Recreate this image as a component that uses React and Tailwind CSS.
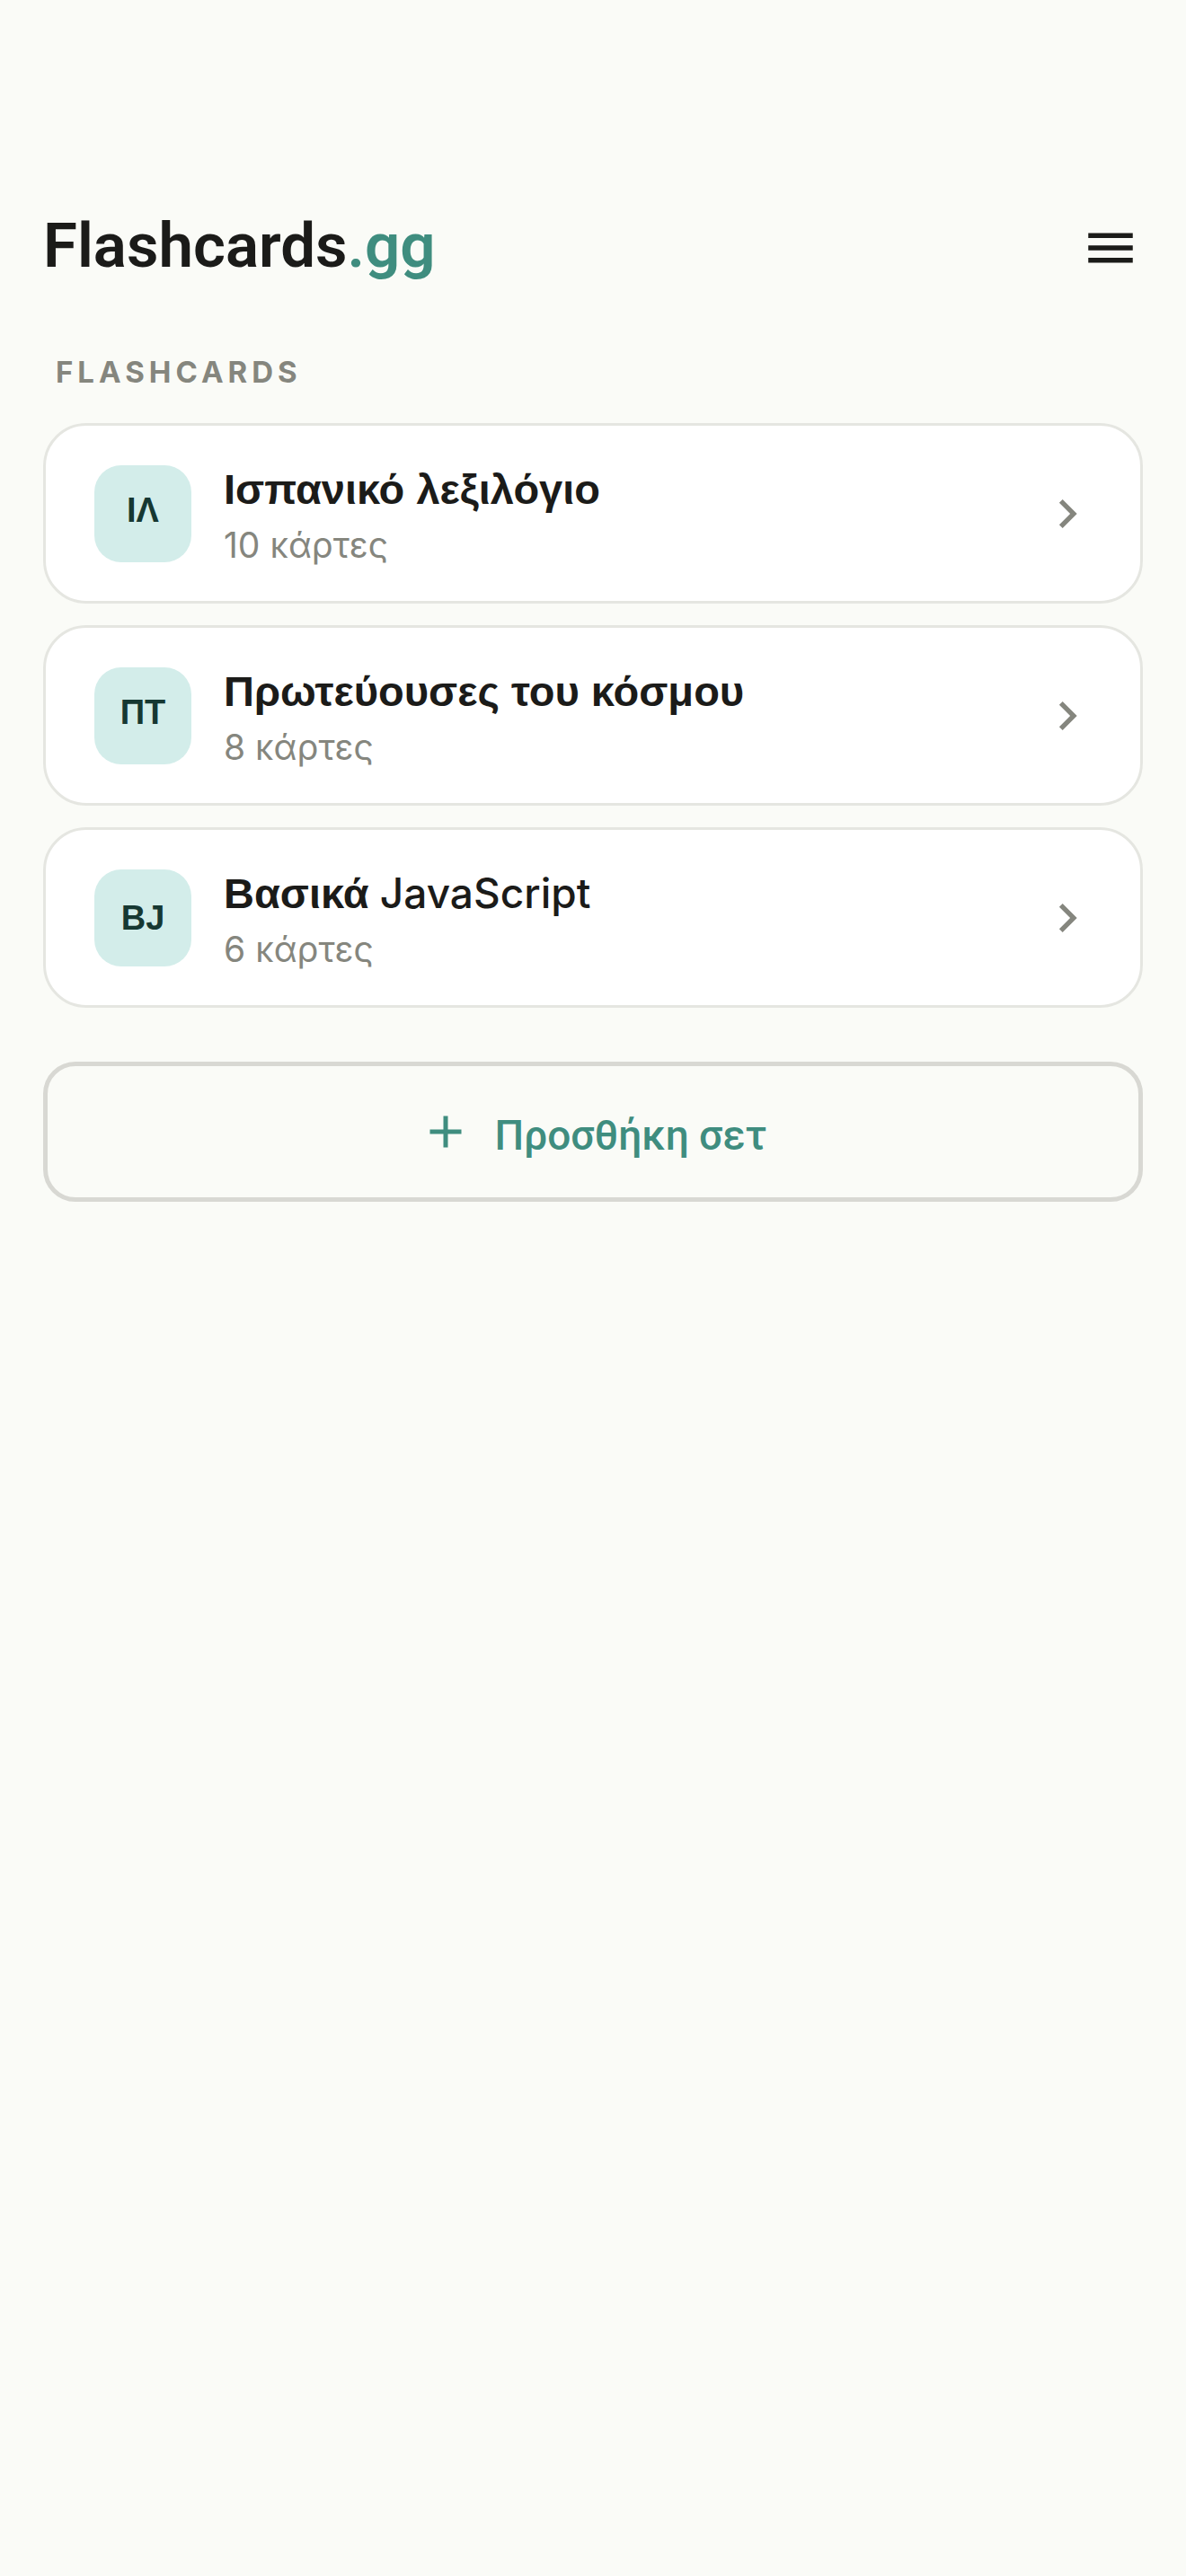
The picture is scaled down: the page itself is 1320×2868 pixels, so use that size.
const sets = [
  { id: 1, initials: "ΙΛ", title: "Ισπανικό λεξιλόγιο", count: 10 },
  { id: 2, initials: "ΠΤ", title: "Πρωτεύουσες του κόσμου", count: 8 },
  { id: 3, initials: "ΒJ", title: "Βασικά", latin: "JavaScript", count: 6 },
];

const MenuIcon = () => (
  <svg className="size-[66px]" viewBox="0 0 24 24" fill="currentColor" aria-hidden="true">
    <path d="M3 18h18v-2H3v2zm0-5h18v-2H3v2zm0-7v2h18V6H3z" />
  </svg>
);

const ChevronIcon = () => (
  <svg className="size-16 shrink-0 text-[#85867e]" viewBox="0 0 24 24" fill="currentColor" aria-hidden="true">
    <path d="M10 6 8.59 7.41 13.17 12l-4.58 4.59L10 18l6-6z" />
  </svg>
);

const PlusIcon = () => (
  <svg className="size-[60px]" viewBox="0 0 24 24" fill="currentColor" aria-hidden="true">
    <path d="M19 13h-6v6h-2v-6H5v-2h6V5h2v6h6v2z" />
  </svg>
);

const SetCard = (props) => {
  const { initials, title, latin, count } = props;

  return (
    <li>
      <button
        type="button"
        className="flex w-full items-center gap-9 rounded-[48px] border-[3px] border-[#e5e6e1] bg-white py-[37px] pl-[54px] pr-[49px] text-left"
      >
        <span
          className={
            latin
              ? "flex size-[108px] shrink-0 items-center justify-center rounded-[30px] bg-[#d3edea] text-[38px] leading-[48px] font-bold text-[#163832]"
              : "flex size-[108px] shrink-0 items-center justify-center rounded-[30px] bg-[#d3edea] pb-2 text-[38px] leading-[48px] font-bold text-[#163832]"
          }
        >
          {initials}
        </span>
        <span className="flex min-w-0 flex-1 flex-col gap-[3px]">
          <span className="text-[47px] leading-[68px] font-bold">
            {title}
            {latin && <span className="font-['Inter',sans-serif] text-[46px] leading-none font-medium"> {latin}</span>}
          </span>
          <span className="font-['Inter',sans-serif] text-[39px] leading-[50px] text-[#85867e]">
            {count} κάρτες
          </span>
        </span>
        <ChevronIcon />
      </button>
    </li>
  );
};

export default function App() {
  return (
    <div className="min-h-screen bg-[#fafbf7] px-12 pt-[234px] font-['Liberation_Sans',sans-serif] text-[#1b1b19]">
      <header className="flex items-center justify-between pr-[3px]">
        <h1 className="pb-1 font-['Roboto',sans-serif] text-[69px] leading-[80px] font-semibold">
          Flashcards<span className="text-[#3f8d7f]">.gg</span>
        </h1>
        <button type="button" aria-label="Μενού">
          <MenuIcon />
        </button>
      </header>
      <main className="pt-[76px]">
        <h2 className="pl-[14px] font-['Inter',sans-serif] text-[33px] leading-[40px] font-bold tracking-[5px] text-[#85867e]">
          FLASHCARDS
        </h2>
        <ul className="mt-[37px] flex flex-col gap-6">
          {sets.map((set) => (
            <SetCard key={set.id} {...set} />
          ))}
        </ul>
        <button
          type="button"
          className="mt-[60px] flex h-[156px] w-full items-center justify-center gap-6 rounded-[36px] border-[5px] border-[#d8d8d3] font-['Roboto',sans-serif] text-[46px] font-medium text-[#3f8d7f]"
        >
          <PlusIcon />
          <span className="pt-2">Προσθήκη σετ</span>
        </button>
      </main>
    </div>
  );
}
